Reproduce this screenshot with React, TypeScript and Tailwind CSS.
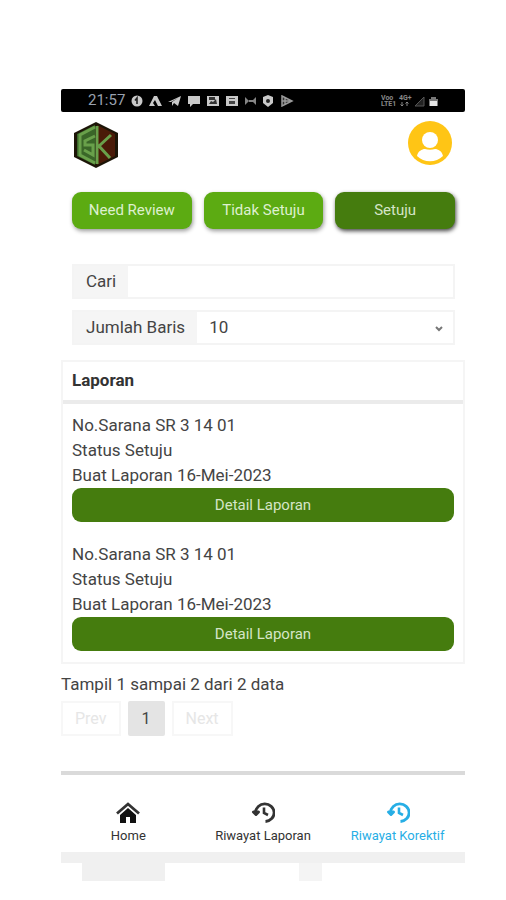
import { useState } from "react";

const reports = [
  { id: 1, sarana: "SR 3 14 01", status: "Setuju", date: "16-Mei-2023" },
  { id: 2, sarana: "SR 3 14 01", status: "Setuju", date: "16-Mei-2023" },
];

const filters = ["Need Review", "Tidak Setuju", "Setuju"];

function StatusBar() {
  return (
    <div className="flex h-[23px] items-center justify-between rounded-xs bg-black pr-[26px] pl-[27px]">
      <div className="flex items-center gap-[6px]">
        <span className="text-[15px] leading-none text-gray-400">21:57</span>
        <svg viewBox="0 0 164 12" className="h-3 w-[164px]" fill="#c9c9c9" aria-hidden="true">
          <circle cx="6" cy="6" r="5.5" />
          <path d="M6 3v6M4 5.500l2-2.500v6" stroke="#222" strokeWidth="1.600" fill="none" />
          <path d="M23 1h3l5 10h-4l-3-6-2 3 2 3h-6z" />
          <path d="M37 7 50 1l-3 10-4-3-2 3v-4l6-4-7 4z" />
          <path d="M57 1h12v8h-7l-3 3V9h-2z" />
          <path d="M76 1h12v10H76z" />
          <path d="m78 9 2-3 2 1 3-3 1 5zM78 2h6v3h-6z" fill="#333" />
          <path d="M95 1h12v10H95z" />
          <path d="M98 3h6v1h-6zM98 6h6v3h-6z" fill="#444" />
          <path d="M114 2v8l4-4zM125 2v8l-4-4zM117 5h5v2h-5z" fill="#858585" />
          <path d="m137 0 5 2v6l-5 4-5-4V2z" />
          <circle cx="137" cy="6" r="2" fill="#222" />
          <path d="m151 1 10 5-10 5zM154 3v6M151 6h10" fill="#333" stroke="#999" strokeWidth="1.500" />
        </svg>
      </div>
      <svg viewBox="0 0 58 20" className="h-5 w-[58px]" aria-hidden="true">
        <g fill="#888" fontFamily="Roboto, sans-serif" fontSize="7" fontWeight="700">
          <text x="0" y="9">Voo</text>
          <text x="0" y="15">LTE1</text>
          <text x="18" y="9">4G+</text>
        </g>
        <path d="M21 11v4M19.500 13.500 21 15l1.500-1.500M26 15v-4M24.500 12.500 26 11l1.500 1.500" fill="none" stroke="#888" />
        <path d="M34 15h9V6z" fill="#222" stroke="#555" />
        <path d="M50 6h5v2h2v7h-9V8h2z" fill="#777" />
        <path d="M49 10h7v5h-7z" fill="#e5e5e5" />
      </svg>
    </div>
  );
}

function Logo() {
  return (
    <svg viewBox="0 0 48 48" className="size-12" role="img" aria-label="SK">
      <path d="M24 1 46 12v24L24 47 2 36V12z" fill="#1c1507" />
      <path d="M25 4 43 13v22L25 44z" fill="#4a1b08" />
      <path d="M23 4 5 13v22l18 9z" fill="#3a6628" />
      <g fill="none" stroke="#69a04a" strokeWidth="3">
        <path d="M23 6 8 14v20l15 8" />
        <path d="M23 15l-10 5v4h8v10l-9-5" />
        <path d="M25 5v38M39 14 27 25l11 12" />
      </g>
    </svg>
  );
}

function Avatar() {
  return (
    <svg viewBox="0 0 44 44" className="size-11" aria-hidden="true">
      <circle cx="22" cy="22" r="22" fill="#ffc515" />
      <circle cx="22" cy="19" r="8" fill="#fff" />
      <path d="M9 35c1-5 5-7 8-7 3 1 7 1 10 0 3 0 7 2 8 7-7 7-19 7-26 0z" fill="#fff" />
    </svg>
  );
}

function HomeIcon() {
  return (
    <svg viewBox="0 0 24 22" className="h-[22px] w-6" aria-hidden="true">
      <path d="M12 6 4 13v8h6v-6h4v6h6v-8z" fill="#111" />
      <path d="M1 11.500 12 2l11 9.500" fill="none" stroke="#333" strokeWidth="2.800" />
    </svg>
  );
}

function HistoryIcon() {
  return (
    <svg viewBox="0 0 24 22" className="h-[22px] w-6" fill="none" stroke="currentColor" aria-hidden="true">
      <path d="M4.500 10.500a9.300 8.800 0 1 1 10 9" strokeWidth="2.800" />
      <path d="M2.500 10h5L5 12.500z" fill="currentColor" strokeWidth="3" strokeLinejoin="round" />
      <path d="M13 5.500v5.500l4 2" strokeWidth="2.600" />
    </svg>
  );
}

function BottomNav() {
  return (
    <nav className="mt-[35px] grid grid-cols-3 border-t-4 border-[#dadada] pt-[27px] text-[13px] leading-4 text-[#333]">
      <a href="#home" className="flex flex-col items-center gap-1">
        <HomeIcon />
        Home
      </a>
      <a href="#laporan" className="flex flex-col items-center gap-1">
        <HistoryIcon />
        Riwayat Laporan
      </a>
      <a href="#korektif" className="flex flex-col items-center gap-1 text-[#27aee5]">
        <HistoryIcon />
        Riwayat Korektif
      </a>
    </nav>
  );
}

export default function App() {
  const [active, setActive] = useState("Setuju");
  const [search, setSearch] = useState("");

  return (
    <div className="min-h-screen bg-white pt-[89px] pr-[41px] pl-[61px] font-[Roboto,sans-serif] text-[17px] text-[#444]">
      <StatusBar />

      <header className="flex items-start justify-between pt-[9px] pr-[13px] pl-[11px]">
        <Logo />
        <Avatar />
      </header>

      <main>
        {/* Filter buttons */}
        <div className="mt-[23px] grid grid-cols-3 gap-3 pr-[10px] pl-[11px]">
          {filters.map((name) => (
            <button
              key={name}
              type="button"
              onClick={() => setActive(name)}
              className={
                active === name
                  ? "h-[37px] rounded-[9px] bg-[#457c0e] text-[15px] text-[#d5e5c7] shadow-[1px_2px_4px_#444]"
                  : "h-[37px] rounded-[9px] bg-[#5cab12] text-[15px] text-[#def0cf] shadow-[1px_2px_4px_#999]"
              }
            >
              {name}
            </button>
          ))}
        </div>

        {/* Search and page size */}
        <div className="mt-[35px] space-y-[11px] pr-[10px] pl-[11px]">
          <div className="flex h-[35px] border-2 border-[#f4f4f4]">
            <label htmlFor="cari" className="flex items-center bg-[#f5f5f5] px-3">
              Cari
            </label>
            <input
              id="cari"
              value={search}
              onChange={(e) => setSearch(e.target.value)}
              className="min-w-0 flex-1 px-3 outline-none"
            />
          </div>
          <div className="flex h-[35px] border-2 border-[#f4f4f4]">
            <label htmlFor="baris" className="flex items-center bg-[#f5f5f5] px-3 whitespace-nowrap">
              Jumlah Baris
            </label>
            <div className="relative flex min-w-0 flex-1">
              <select id="baris" defaultValue="10" className="w-full appearance-none px-3 outline-none">
                <option>10</option>
                <option>25</option>
                <option>50</option>
              </select>
              <svg viewBox="0 0 8 6" className="absolute top-[14px] right-[10px] h-1.5 w-2" aria-hidden="true">
                <path d="m1 1 3 3 3-3" fill="none" stroke="#777" strokeWidth="2" />
              </svg>
            </div>
          </div>
        </div>

        {/* Report table */}
        <table className="mt-[15px] w-full border-separate border-spacing-0 border-2 border-[#f5f5f5]">
          <thead>
            <tr>
              <th className="h-[42px] border-b-4 border-[#ebebeb] px-[9px] text-left font-bold text-[#333]">
                Laporan
              </th>
            </tr>
          </thead>
          <tbody>
            {reports.map((report) => (
              <tr key={report.id}>
                <td className="px-[9px] pt-[9px] pb-[11px] leading-[25px]">
                  <p>No.Sarana {report.sarana}</p>
                  <p>Status {report.status}</p>
                  <p>Buat Laporan {report.date}</p>
                  <button
                    type="button"
                    className="block h-[34px] w-full rounded-[9px] bg-[#457c0e] text-[15px] text-[#d5e5c7]"
                  >
                    Detail Laporan
                  </button>
                </td>
              </tr>
            ))}
          </tbody>
        </table>

        {/* Pagination */}
        <p className="mt-2 leading-[25px]">Tampil 1 sampai 2 dari 2 data</p>
        <div className="mt-1 flex gap-[7px] text-[16px]">
          <button type="button" disabled className="h-[35px] border-2 border-[#f7f7f7] px-3 text-[#e6e6e6]">
            Prev
          </button>
          <button type="button" className="h-[35px] rounded-xs bg-[#e4e4e4] px-[14px]">
            1
          </button>
          <button type="button" disabled className="h-[35px] border-2 border-[#f7f7f7] px-3 text-[#e6e6e6]">
            Next
          </button>
        </div>
      </main>

      <BottomNav />

      <div className="mt-2 h-[11px] bg-[#f0f0f0]" />
      <div className="flex h-[18px] justify-between pr-[143px] pl-[21px]">
        <div className="w-[83px] bg-[#f0f0f0]" />
        <div className="w-[23px] bg-[#f4f4f4]" />
      </div>
    </div>
  );
}
